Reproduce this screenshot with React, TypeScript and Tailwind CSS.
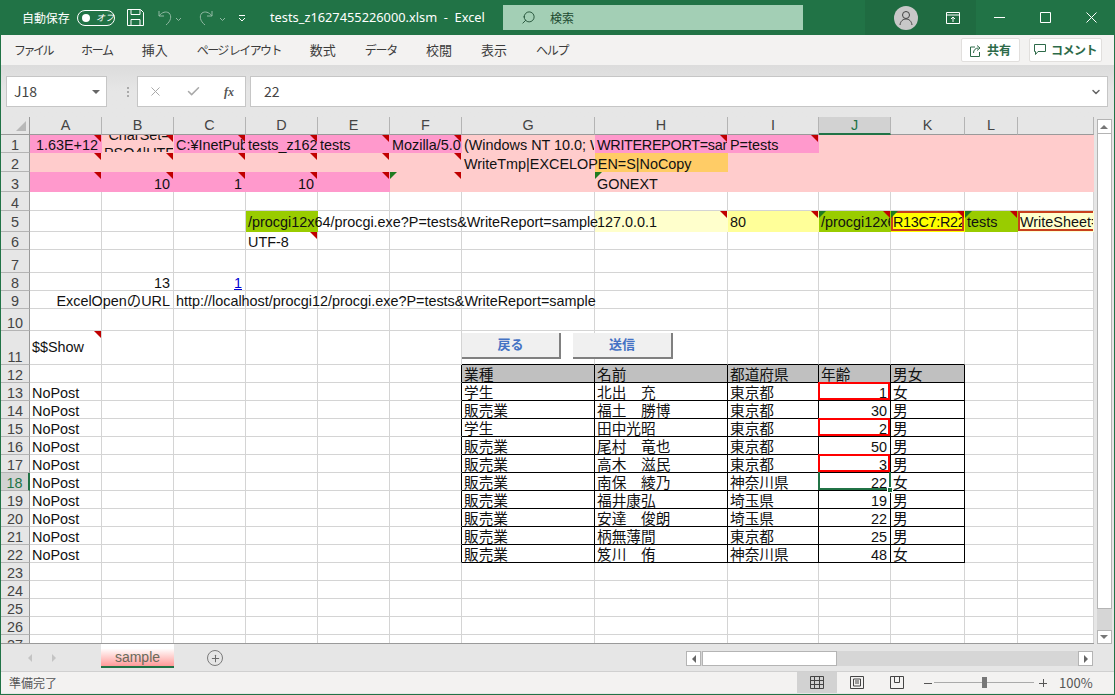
import { Search, ChevronDown, X, Check, Plus } from "lucide-react";
import type { ReactNode } from "react";

type Cell = {
  t?: ReactNode;
  right?: boolean;
  center?: boolean;
  fill?: string;
  clip?: boolean;
  cut?: boolean;
  lift?: boolean;
  red?: boolean;
  green?: boolean;
  box?: string;
  line?: string;
  handle?: boolean;
};

const colNames = ["A", "B", "C", "D", "E", "F", "G", "H", "I", "J", "K", "L", ""];
const keys = "ABCDEFGHIJKLM".split("");

const pink = "bg-[#ff99cc] border-[#ff99cc]";
const pale = "bg-[#ffcccc] border-[#ffcccc]";
const lime = "bg-[#99cc00] border-[#99cc00]";

const paleRow = (): Record<string, Cell> =>
  Object.fromEntries(keys.map((k) => [k, { fill: pale }]));

const people = [
  ["学生", "北出　充", "東京都", "1", "女"],
  ["販売業", "福土　勝博", "東京都", "30", "男"],
  ["学生", "田中光昭", "東京都", "2", "男"],
  ["販売業", "尾村　竜也", "東京都", "50", "男"],
  ["販売業", "高木　滋民", "東京都", "3", "男"],
  ["販売業", "南保　綾乃", "神奈川県", "22", "女"],
  ["販売業", "福井康弘", "埼玉県", "19", "男"],
  ["販売業", "安達　俊朗", "埼玉県", "22", "男"],
  ["販売業", "柄無薄間", "東京都", "25", "男"],
  ["販売業", "笈川　侑", "神奈川県", "48", "女"],
];

const redBox = "absolute -left-[1px] -top-[1px] right-0 bottom-0 border-2 border-[#ff0000]";

function Jp({ children }: { children: ReactNode }) {
  return <span className="text-[14.67px]">{children}</span>;
}

function buildRows(): Record<string, Cell>[] {
  const rows: Record<string, Cell>[] = Array.from({ length: 27 }, () => ({}));
  rows[0] = {
    ...paleRow(),
    A: { t: "1.63E+12", right: true, fill: pink, red: true, clip: true },
    B: { t: <span className="block whitespace-normal text-center leading-[18px]">CharSet=<br />PSO4|UTF</span>, center: true, fill: pale, red: true, cut: true },
    C: { t: "C:¥InetPub", fill: pink, red: true, clip: true },
    D: { t: "tests_z1627", fill: pink, red: true, clip: true },
    E: { t: "tests", fill: pink, red: true, clip: true },
    F: { t: "Mozilla/5.0", fill: pink, red: true, clip: true },
    G: { t: "(Windows NT 10.0; Win64", fill: pale, clip: true },
    H: { t: <span className="tracking-[-0.3px]">WRITEREPORT=sample</span>, fill: pink, red: true, clip: true },
    I: { t: "P=tests", fill: pink, red: true, clip: true },
  };
  rows[1] = {
    ...paleRow(),
    A: { fill: pale, red: true },
    B: { fill: pale, red: true },
    C: { fill: pale, red: true },
    D: { fill: pale, red: true },
    E: { fill: pale, red: true },
    F: { fill: pale, red: true },
    G: { t: "WriteTmp|EXCELOPEN=S|NoCopy", fill: pale },
    H: { fill: "bg-[#ffcc66] border-[#ffcc66]" },
  };
  rows[2] = {
    ...paleRow(),
    A: { fill: pink, red: true },
    B: { t: "10", right: true, fill: pink, red: true },
    C: { t: "1", right: true, fill: pink, red: true },
    D: { t: "10", right: true, fill: pink, red: true },
    E: { fill: pink, red: true },
    F: { fill: pale, red: true, green: true },
    H: { t: "GONEXT", fill: pale, green: true },
  };
  rows[4] = {
    D: { t: "/procgi12x64/procgi.exe?P=tests&WriteReport=sample", fill: lime, lift: true },
    H: { t: "127.0.0.1", fill: "bg-[#ffffcc] border-[#ffffcc]", red: true, lift: true },
    I: { t: "80", fill: "bg-[#ffff99] border-[#ffff99]", red: true, lift: true },
    J: { t: "/procgi12x64", fill: lime, red: true, green: true, clip: true, lift: true },
    K: { t: <span className="tracking-[-0.3px]">R13C7:R22C11</span>, fill: "bg-[#ffff00] border-[#ffff00]", red: true, green: true, clip: true, lift: true, box: "absolute left-0 top-0 right-0 bottom-0 border-2 border-[#c8401c]" },
    L: { t: "tests", fill: lime, red: true, green: true, clip: true, lift: true },
    M: { t: "WriteSheet=1", fill: "bg-[#ffffcc] border-[#ffffcc]", clip: true, lift: true, box: "absolute left-0 top-0 right-0 bottom-0 border-2 border-r-0 border-[#c8401c]" },
  };
  rows[5] = { D: { t: "UTF-8", red: true } };
  rows[7] = {
    B: { t: "13", right: true },
    C: { t: <span className="text-[#0000d4] underline">1</span>, right: true },
  };
  rows[8] = {
    B: { t: "ExcelOpenのURL", right: true },
    C: { t: "http://localhost/procgi12/procgi.exe?P=tests&WriteReport=sample" },
  };
  rows[10] = {
    A: { t: "$$Show", center: true, red: true },
    G: { line: "border-b-black" },
    H: { line: "border-b-black" },
    I: { line: "border-b-black" },
    J: { line: "border-b-black" },
    K: { line: "border-b-black" },
  };
  rows[11] = {
    F: { line: "border-r-black" },
    G: { t: <Jp>業種</Jp>, fill: "bg-[#c0c0c0] border-black" },
    H: { t: <Jp>名前</Jp>, fill: "bg-[#c0c0c0] border-black" },
    I: { t: <Jp>都道府県</Jp>, fill: "bg-[#c0c0c0] border-black" },
    J: { t: <Jp>年齢</Jp>, fill: "bg-[#c0c0c0] border-black" },
    K: { t: <Jp>男女</Jp>, fill: "bg-[#c0c0c0] border-black" },
  };
  people.forEach((p, i) => {
    const boxed = i === 0 || i === 2 || i === 4;
    rows[12 + i] = {
      A: { t: "NoPost" },
      F: { line: "border-r-black" },
      G: { t: <Jp>{p[0]}</Jp>, line: "border-black" },
      H: { t: <Jp>{p[1]}</Jp>, line: "border-black" },
      I: { t: <Jp>{p[2]}</Jp>, line: "border-black" },
      J: {
        t: p[3],
        right: true,
        line: "border-black",
        box: boxed ? redBox : undefined,
        handle: i === 5,
      },
      K: { t: <Jp>{p[4]}</Jp>, line: "border-black" },
    };
  });
  return rows;
}

function Triangle({ kind }: { kind: "red" | "green" }) {
  if (kind === "red") {
    return <span className="absolute top-0 right-0 z-20 size-[7px] bg-[#c00000] [clip-path:polygon(0_0,100%_0,100%_100%)]" />;
  }
  return <span className="absolute top-0 left-0 z-20 size-[7px] bg-[#207a20] [clip-path:polygon(0_0,100%_0,0_100%)]" />;
}

function SheetCell({ cell }: { cell: Cell }) {
  return (
    <div
      className={`relative flex whitespace-nowrap border-r border-b px-[2px] ${
        cell.center ? "items-center" : "items-end"
      } ${cell.right ? "justify-end pr-[3px]" : ""} ${cell.clip ? "overflow-x-clip" : ""} ${
        cell.cut ? "overflow-hidden" : ""
      } ${cell.lift ? "pb-[2px]" : ""} ${cell.fill ?? "border-[#d4d4d4]"} ${cell.line ?? ""}`}
    >
      {cell.t !== undefined && <span className={`relative z-10 ${cell.center ? "leading-[17px]" : "leading-[14px]"}`}>{cell.t}</span>}
      {cell.box && <span className={`z-20 ${cell.box}`} />}
      {cell.red && <Triangle kind="red" />}
      {cell.green && <Triangle kind="green" />}
      {cell.handle && (
        <>
          <span className="absolute -left-[1px] -top-[1px] -right-[1px] bottom-0 z-20 border-2 border-t-0 border-[#217346]" />
          <span className="absolute -right-[3px] -bottom-[3px] z-30 size-[6px] border border-white bg-[#217346]" />
        </>
      )}
    </div>
  );
}

function Sheet() {
  const rows = buildRows();
  return (
    <div className="relative h-[527px] w-[1093px] overflow-hidden border-b border-[#9a9a9a] bg-white font-['Liberation_Sans','Noto_Sans_CJK_JP',sans-serif] text-[14.4px] text-[#111]">
      <div className="grid grid-cols-[29px_72px_72px_72px_72px_72px_72px_133px_133px_91px_72px_74px_53px_76px] grid-rows-[18px_18px_19px_20px_19px_21px_18px_23px_18px_18px_22px_34px_repeat(16,18px)]">
        <div className="relative border-r border-b border-[#9a9a9a] bg-[#e6e6e6]">
          <span className="absolute right-[3px] bottom-[3px] size-[10px] bg-[#b8b8b8] [clip-path:polygon(100%_0,100%_100%,0_100%)]" />
        </div>
        {colNames.map((name, i) => (
          <div
            key={i}
            className={`flex items-center justify-center border-r border-b pt-[1px] text-[#444] ${
              name === "J"
                ? "border-r-[#b4b4b4] border-b-2 border-b-[#217346] bg-[#d2d2d2] text-[#217346]"
                : "border-r-[#b4b4b4] border-b-[#9a9a9a] bg-[#e6e6e6]"
            }`}
          >
            {name}
          </div>
        ))}
        {rows.map((row, r) => (
          <div key={r} className="contents">
            <div
              className={`flex items-end justify-center border-r border-b leading-[14px] ${r === 4 ? "pb-[2px]" : ""} ${
                r === 17
                  ? "border-r-2 border-r-[#217346] border-b-[#b4b4b4] bg-[#d2d2d2] text-[#217346]"
                  : "border-r-[#9a9a9a] border-b-[#b4b4b4] bg-[#e6e6e6] text-[#444]"
              }`}
            >
              {r + 1}
            </div>
            {keys.map((k) => (
              <SheetCell key={k} cell={row[k] ?? {}} />
            ))}
          </div>
        ))}
      </div>
      <button className="absolute top-[216px] left-[461px] z-30 flex h-[26px] w-[99px] items-center justify-center border-r-2 border-b-2 border-[#808080] bg-[#f0f0f0] text-[13px] font-bold text-[#4472c4]">
        戻る
      </button>
      <button className="absolute top-[216px] left-[572px] z-30 flex h-[26px] w-[100px] items-center justify-center border-r-2 border-b-2 border-[#808080] bg-[#f0f0f0] text-[13px] font-bold text-[#4472c4]">
        送信
      </button>
    </div>
  );
}

function VScroll() {
  return (
    <div className="flex h-[527px] w-[20px] flex-col items-center bg-[#e6e6e6] pt-[2px]">
      <div className="flex h-[15px] w-[15px] items-center justify-center border border-[#b4b4b4] bg-white">
        <span className="size-0 border-x-[4px] border-b-[4px] border-x-transparent border-b-[#777]" />
      </div>
      <div className="h-[475px] w-[15px] border-x border-b border-[#b4b4b4] bg-white" />
      <div className="h-[21px] w-[15px] bg-[#d6d6d6]" />
      <div className="flex h-[14px] w-[15px] items-center justify-center border border-[#b4b4b4] bg-white">
        <span className="size-0 border-x-[4px] border-t-[4px] border-x-transparent border-t-[#777]" />
      </div>
    </div>
  );
}

function TitleBar() {
  return (
    <div className="flex h-[35px] items-center whitespace-nowrap bg-[#217346] text-white">
      <span className="ml-[21px] w-[48px] text-[12px] tracking-[-0.1px]">自動保存</span>
      <div className="ml-[7px] flex h-[16px] w-[38px] items-center rounded-full border border-white pl-[4px]">
        <span className="size-[8px] rounded-full bg-white" />
        <span className="ml-[6px] text-[9px] italic leading-none">オフ</span>
      </div>
      <svg className="ml-[12px]" width="17" height="17" viewBox="0 0 17 17" fill="none" stroke="white">
        <path d="M.5.5h13l3 3v13H.5zM4 .5v5h9v-5M4 16.500v-6h9v6" />
      </svg>
      <svg className="ml-[12px] opacity-50" width="34" height="18" viewBox="0 0 34 18" fill="none" stroke="white">
        <path d="M3 2v5h5M3 7c3-4 7-5 10-3 3 3 2 8-3 12" />
        <path d="M20 9l2.500 2.500L25 9" />
      </svg>
      <svg className="ml-[7px] opacity-50" width="34" height="18" viewBox="0 0 34 18" fill="none" stroke="white">
        <path d="M15 2v5h-5M15 7c-3-4-7-5-10-3-3 3-2 8 3 12" />
        <path d="M23 9l2.500 2.500L28 9" />
      </svg>
      <svg className="ml-[6px]" width="10" height="10" viewBox="0 0 10 10" fill="none" stroke="white">
        <path d="M2 2.500h6M2 5l3 3 3-3" />
      </svg>
      <span className="ml-[23px] w-[228px] whitespace-pre font-['Noto_Sans',sans-serif] text-[12.8px]">tests_z1627455226000.xlsm  -  Excel</span>
      <div className="ml-[5px] flex h-[25px] w-[300px] items-center bg-[#a3cfb5] text-[#1c4a30]">
        <Search className="ml-[18px] size-[15px] -scale-x-100" strokeWidth={1.4} />
        <span className="ml-[14px] text-[12px]">検索</span>
      </div>
      <div className="ml-auto flex h-[35px] w-[65px] items-center bg-[#1f6b41]">
        <div className="ml-[29px] flex size-[24px] items-center justify-center rounded-full bg-[#c8c8c8]">
          <svg width="16" height="16" viewBox="0 0 16 16" fill="none" stroke="#444">
            <circle cx="8" cy="5" r="3.500" />
            <path d="M2 15c.5-4 3-6 6-6s5.500 2 6 6" />
          </svg>
        </div>
      </div>
      <div className="flex h-[35px] w-[46px] items-center justify-center bg-[#1f6b41]">
        <svg width="14" height="12" viewBox="0 0 14 12" fill="none" stroke="white">
          <path d="M.5.500h13v11H.5zM.5 3h13M7 10V5M5 7l2-2 2 2" />
        </svg>
      </div>
      <div className="flex w-[46px] justify-center">
        <svg width="11" height="11" viewBox="0 0 11 11" stroke="white"><path d="M0 5.500h11" /></svg>
      </div>
      <div className="flex w-[46px] justify-center">
        <svg width="11" height="11" viewBox="0 0 11 11" fill="none" stroke="white"><path d="M.5.500h10v10H.5z" /></svg>
      </div>
      <div className="flex w-[46px] justify-center">
        <svg width="11" height="11" viewBox="0 0 11 11" stroke="white"><path d="M.5.500l10 10M10.500.500l-10 10" /></svg>
      </div>
    </div>
  );
}

function RibbonTabs() {
  return (
    <div className="flex h-[30px] items-center bg-[#f3f2f1] pl-[13px] pr-[12px] text-[13px] text-[#3b3b3b]">
      <div className="flex items-baseline gap-[29px]">
        <span className="text-[12px] tracking-[-2.5px]">ファイル</span>
        <span className="text-[12px] tracking-[-1.3px]">ホーム</span>
        <span>挿入</span>
        <span className="text-[12px] tracking-[-1.6px]">ページ レイアウト</span>
        <span>数式</span>
        <span className="text-[12px] tracking-[-1.3px]">データ</span>
        <span>校閲</span>
        <span>表示</span>
        <span className="text-[12px] tracking-[-1.3px]">ヘルプ</span>
      </div>
      <div className="ml-auto flex gap-[9px] text-[12px] text-[#2d6a49]">
        <div className="flex h-[24px] w-[59px] items-center justify-center gap-[5px] rounded-[2px] border border-[#e1dfdd] bg-white font-bold">
          <svg width="12" height="13" viewBox="0 0 12 13" fill="none" stroke="#2d6a49">
            <path d="M5 3H.5v9.500h9V8M3.500 9c0-3 2-5 5-5M7 1.500l3 2.500-3 2.500" />
          </svg>
          共有
        </div>
        <div className="flex h-[24px] w-[73px] items-center justify-center gap-[5px] rounded-[2px] border border-[#e1dfdd] bg-white font-bold tracking-[-0.5px]">
          <svg width="12" height="12" viewBox="0 0 12 12" fill="none" stroke="#2d6a49">
            <path d="M.5.500h11v7H4l-2.500 3v-3h-1z" />
          </svg>
          コメント
        </div>
      </div>
    </div>
  );
}

function FormulaBar() {
  return (
    <div className="flex h-[52px] items-start bg-gradient-to-b from-[#dcdcdc] via-[#e6e6e6] to-[#e6e6e6] pt-[11px] pl-[5px] pr-[6px]">
      <div className="flex h-[31px] w-[101px] items-center border border-[#c6c6c6] bg-white pl-[7px] pr-[6px] text-[14px] text-[#444]">
        J18
        <span className="ml-auto size-0 border-x-[4px] border-t-[4px] border-x-transparent border-t-[#666]" />
      </div>
      <div className="ml-[12px] flex h-[31px] w-[18px] flex-col items-center justify-center gap-[2px]">
        <span className="size-[2px] bg-[#aaa]" />
        <span className="size-[2px] bg-[#aaa]" />
        <span className="size-[2px] bg-[#aaa]" />
      </div>
      <div className="flex h-[31px] w-[109px] items-center border border-[#c6c6c6] bg-white text-[#a9a9a9]">
        <X className="ml-[10px] size-[15px]" strokeWidth={1.6} />
        <Check className="ml-[23px] size-[15px]" strokeWidth={2.4} />
        <span className="ml-[23px] font-['Liberation_Serif',serif] text-[12px] font-bold italic text-[#555]">fx</span>
      </div>
      <div className="ml-[4px] flex h-[31px] flex-1 items-center border border-[#c6c6c6] bg-white pl-[13px] pr-[5px] text-[14px] text-[#444]">
        22
        <ChevronDown className="ml-auto size-[12px] text-[#666]" strokeWidth={3} />
      </div>
    </div>
  );
}

function TabStrip() {
  return (
    <div className="flex h-[27px] items-start bg-[#e6e6e6]">
      <div className="flex h-[27px] w-[100px] items-center gap-[20px] pl-[27px]">
        <span className="size-0 border-y-[4px] border-r-[4px] border-y-transparent border-r-[#c4c4c4]" />
        <span className="size-0 border-y-[4px] border-l-[4px] border-y-transparent border-l-[#c4c4c4]" />
      </div>
      <div className="flex h-[24px] w-[73px] items-end justify-center border-b-2 border-[#217346] bg-gradient-to-b from-white from-[20%] to-[#ff9999] pb-[2px] font-['Liberation_Sans',sans-serif] text-[14px] leading-[14px] text-[#6a6a5a]">
        sample
      </div>
      <div className="ml-[33px] mt-[6px] flex size-[16px] items-center justify-center rounded-full border border-[#7a7a7a] text-[#6a6a6a]">
        <Plus className="size-[11px]" strokeWidth={2.2} />
      </div>
      <div className="ml-[463px] mt-[7px] flex h-[15px] w-[407px] bg-[#d6d6d6]">
        <div className="flex w-[15px] items-center justify-center border border-[#b4b4b4] bg-white">
          <span className="size-0 border-y-[4px] border-r-[4px] border-y-transparent border-r-[#666]" />
        </div>
        <div className="ml-[1px] w-[135px] border border-[#b4b4b4] bg-white" />
        <div className="ml-auto flex w-[15px] items-center justify-center border border-[#b4b4b4] bg-white">
          <span className="size-0 border-y-[4px] border-l-[4px] border-y-transparent border-l-[#666]" />
        </div>
      </div>
    </div>
  );
}

function StatusBar() {
  return (
    <div className="flex h-[22px] items-center border-t border-[#d0d0d0] bg-[#f3f2f1] text-[12px] text-[#555]">
      <span className="ml-[8px] w-[48px]">準備完了</span>
      <div className="ml-[740px] flex h-full w-[40px] items-center justify-center bg-[#d2d2d2]">
        <svg width="14" height="13" viewBox="0 0 14 13" fill="none" stroke="#444">
          <path d="M.5.500h13v12H.5zM.5 4.500h13M.5 8.500h13M4.500.500v12M9.500.500v12" />
        </svg>
      </div>
      <div className="flex w-[40px] justify-center">
        <svg width="14" height="13" viewBox="0 0 14 13" fill="none" stroke="#444">
          <path d="M.5.500h13v12H.5zM3.500 3h7v7h-7zM5 5h4M5 7h4" />
        </svg>
      </div>
      <div className="flex w-[40px] justify-center">
        <svg width="14" height="13" viewBox="0 0 14 13" fill="none" stroke="#444">
          <path d="M.5.500h13v12H.5zM4.500.500v6h5v-6" />
        </svg>
      </div>
      <svg className="ml-[7px]" width="8" height="8" viewBox="0 0 8 8" stroke="#555"><path d="M0 4.500h8" /></svg>
      <div className="relative ml-[2px] h-px w-[100px] bg-[#aaa]">
        <span className="absolute -top-[5px] left-[48px] h-[11px] w-[5px] bg-[#777]" />
      </div>
      <svg className="ml-[5px]" width="8" height="8" viewBox="0 0 8 8" stroke="#555"><path d="M0 4.500h8M4.500 0v8" /></svg>
      <span className="ml-[12px] text-[13px]">100%</span>
    </div>
  );
}

export default function App() {
  return (
    <div className="flex h-[695px] w-[1115px] flex-col overflow-hidden border-x border-b border-[#217346] bg-[#e6e6e6] font-['Noto_Sans_CJK_JP',sans-serif]">
      <TitleBar />
      <RibbonTabs />
      <FormulaBar />
      <div className="flex">
        <Sheet />
        <VScroll />
      </div>
      <TabStrip />
      <StatusBar />
    </div>
  );
}
